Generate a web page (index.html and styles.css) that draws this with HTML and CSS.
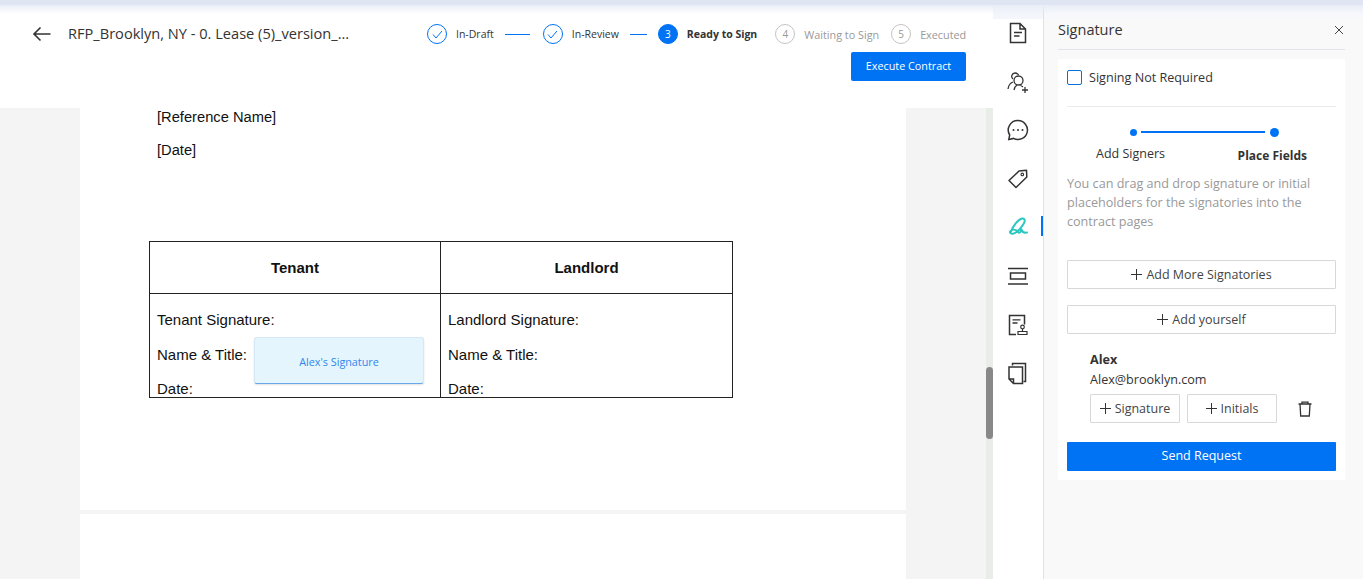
FILE: index.html
```html
<!DOCTYPE html>
<html lang="en">
<head>
<meta charset="utf-8">
<title>Signature</title>
<link rel="stylesheet" href="styles.css">
</head>
<body>
<div class="app">
  <main class="main">
    <header class="header">
      <div class="header-row">
        <svg class="back" width="20" height="16" viewBox="0 0 20 16"><path d="M18.5 8H2M8.5 1.5 2 8l6.5 6.5" fill="none" stroke="#333" stroke-width="1.6"/></svg>
        <span class="doc-title">RFP_Brooklyn, NY - 0. Lease (5)_version_...</span>
        <ol class="steps">
          <li class="step done"><span class="dot"><svg width="11" height="9" viewBox="0 0 11 9"><path d="M1 4.5 4 8l6-7" fill="none" stroke="#0073f5" stroke-width="1"/></svg></span><span>In-Draft</span></li>
          <li class="line l1"></li>
          <li class="step done"><span class="dot"><svg width="11" height="9" viewBox="0 0 11 9"><path d="M1 4.5 4 8l6-7" fill="none" stroke="#0073f5" stroke-width="1"/></svg></span><span>In-Review</span></li>
          <li class="line l2"></li>
          <li class="step current"><span class="dot">3</span><span>Ready to Sign</span></li>
          <li class="step todo s4"><span class="dot">4</span><span>Waiting to Sign</span></li>
          <li class="step todo s5"><span class="dot">5</span><span>Executed</span></li>
        </ol>
      </div>
      <div class="header-actions"><button class="execute">Execute Contract</button></div>
    </header>
    <div class="viewer">
      <div class="pages">
        <section class="page">
          <p class="ref">[Reference Name]</p>
          <p class="ref date">[Date]</p>
          <table class="sign-table">
            <colgroup><col class="col-a"><col class="col-b"></colgroup>
            <tr class="head"><th>Tenant</th><th>Landlord</th></tr>
            <tr>
              <td><p>Tenant Signature:</p><p class="mid">Name &amp; Title:</p><p class="last">Date:</p><div class="placeholder">Alex's Signature</div></td>
              <td><p>Landlord Signature:</p><p class="mid">Name &amp; Title:</p><p class="last">Date:</p></td>
            </tr>
          </table>
        </section>
        <section class="page next"></section>
      </div>
      <div class="scroll"><div class="thumb"></div></div>
    </div>
  </main>
  <nav class="rail">
    <svg class="ico" width="24" height="24" viewBox="0 0 24 24"><path d="M4.5 2.500h9.500l5.500 5.500v13.500h-15zM14 2.500V8h5.500" fill="none" stroke="#333" stroke-width="1.500"/><path d="M8 11.500h8M8 15h5.500" stroke="#333" stroke-width="1.500"/></svg>
    <svg class="ico" width="24" height="24" viewBox="0 0 24 24"><circle cx="12.500" cy="10.500" r="4.500" fill="none" stroke="#333" stroke-width="1.300"/><path d="M7 9C4.500 7 6 3 9 3c1.800 0 3 .8 3.500 2M7 12c-3 1-4.500 3.500-5 7M8 20c.5-2.500 1.500-4 3-5M14.500 15.500c1 .3 1.800.8 2.300 1.500M19 17v6M16 20h6" fill="none" stroke="#333" stroke-width="1.300"/></svg>
    <svg class="ico" width="24" height="24" viewBox="0 0 24 24"><path d="M12 2.500a9.500 9.500 0 1 1-4.500 17.900L2.800 21.500l.9-4.500A9.500 9.500 0 0 1 12 2.500z" fill="none" stroke="#333" stroke-width="1.500"/><circle cx="7.500" cy="12" r="1" fill="#333"/><circle cx="12" cy="12" r="1" fill="#333"/><circle cx="16.500" cy="12" r="1" fill="#333"/></svg>
    <svg class="ico" width="24" height="24" viewBox="0 0 24 24"><path d="M13 4 20.500 3.200l.3 6.800L10 20.500 3 13.500z" fill="none" stroke="#333" stroke-width="1.500" stroke-linejoin="round"/><circle cx="16.300" cy="7.400" r="1.300" fill="none" stroke="#333" stroke-width="1.100"/></svg>
    <div class="active-wrap"><svg class="ico" width="24" height="24" viewBox="0 0 24 24"><path d="M4.500 17.500C7 11 12 4.500 16 3.500c3-.5 3.500 2.500 1.500 5.500-2.500 4-6.500 9-10.500 9.700-3 .3-4-1.700-2-3.200 2.500-1.500 5.500-.5 7 1.500 1.500 1.500 2.500.5 3.500-2.500.5 2.500 2.500 3.500 5.500 3" fill="none" stroke="#2cc7c0" stroke-width="2" stroke-linecap="round" stroke-linejoin="round"/></svg><span class="active-bar"></span></div>
    <svg class="ico" width="24" height="24" viewBox="0 0 24 24"><path d="M2 4.500h20M2 20h20" stroke="#333" stroke-width="1.500"/><rect x="4.500" y="9" width="15" height="6" fill="none" stroke="#333" stroke-width="1.500"/></svg>
    <svg class="ico" width="24" height="24" viewBox="0 0 24 24"><path d="M10 21.500H3.500v-19h15v9" fill="none" stroke="#333" stroke-width="1.500"/><path d="M6.500 6.800h8M6.500 10h5" stroke="#333" stroke-width="1.300"/><circle cx="16.500" cy="14" r="1.800" fill="none" stroke="#333" stroke-width="1.200"/><path d="M16.500 16v2M12 18.500h9v3h-9z" fill="none" stroke="#333" stroke-width="1.200"/></svg>
    <svg class="ico" width="24" height="24" viewBox="0 0 24 24"><path d="M6.500 4.500v-2h13v18h-2" fill="none" stroke="#333" stroke-width="1.500"/><path d="M3 6h13.500v16.500H7.500L3 18zM3 18h4.500v4.500" fill="none" stroke="#333" stroke-width="1.500"/></svg>
  </nav>
  <aside class="panel">
    <div class="panel-head"><h2>Signature</h2><svg width="10" height="10" viewBox="0 0 10 10"><path d="M1 1l8 8M9 1 1 9" stroke="#444" stroke-width="1"/></svg></div>
    <div class="card">
      <label class="check"><span class="box"></span>Signing Not Required</label>
      <div class="wizard">
        <div class="track"><span class="wdot small"></span><span class="wline"></span><span class="wdot"></span></div>
        <div class="wlabels"><span>Add Signers</span><b>Place Fields</b></div>
      </div>
      <p class="hint">You can drag and drop signature or initial placeholders for the signatories into the contract pages</p>
      <button class="outline wide first"><i class="plus"></i>Add More Signatories</button>
      <button class="outline wide"><i class="plus"></i>Add yourself</button>
      <div class="signer">
        <b>Alex</b>
        <span class="email">Alex@brooklyn.com</span>
        <div class="signer-actions">
          <button class="outline"><i class="plus"></i>Signature</button>
          <button class="outline"><i class="plus"></i>Initials</button>
          <svg class="trash" width="16" height="16" viewBox="0 0 16 16"><path d="M1.500 3h13M5 3V1.200h6V3M3 3l.7 12h8.600L13 3" fill="none" stroke="#333" stroke-width="1.300"/></svg>
        </div>
      </div>
      <button class="send">Send Request</button>
    </div>
  </aside>
</div>
</body>
</html>
```
FILE: styles.css
```css
* { box-sizing: border-box; }
html, body { margin: 0; height: 100%; overflow: hidden; }
body { font-family: "Open Sans", "Noto Sans", sans-serif; color: #333; background: #fff; }
button { font-family: inherit; cursor: pointer; }
p, h2, ol { margin: 0; padding: 0; }

.app { display: flex; height: 579px; position: relative; }
.app::before { content: ""; position: absolute; z-index: 3; left: 0; right: 0; top: 0; height: 5px; background: #dfe5f2; }
.app::after { content: ""; position: absolute; z-index: 3; left: 0; right: 0; top: 5px; height: 9px; background: linear-gradient(#e9edf7, rgba(255,255,255,0)); }

.main { width: 993px; display: flex; flex-direction: column; }
.header { height: 108px; padding: 20px 27px 0 32px; background: #fff; flex: none; }
.header-row { display: flex; align-items: center; height: 26px; }
.back { flex: none; margin-top: 1px; }
.doc-title { margin-left: 16px; font-size: 14.600px; color: #333; white-space: nowrap; width: 359px; flex: none; }
.steps { list-style: none; display: flex; align-items: center; font-size: 10.500px; margin-top: 2px; flex: none; white-space: nowrap; }
.step { display: flex; align-items: center; gap: 9px; color: #333; flex: none; }
.dot { width: 20px; height: 20px; flex: none; border-radius: 50%; display: flex; align-items: center; justify-content: center; border: 1px solid #0073f5; font-size: 10px; }
.line { width: 25px; height: 1px; background: #0073f5; margin: 0 13px 0 11px; flex: none; }
.l2 { width: 17px; margin: 0 11px; }
.current { font-weight: 700; }
.current .dot { background: #0073f5; color: #fff; font-weight: 400; }
.todo { color: #999; font-size: 10.800px; }
.todo .dot { border-color: #c4c4c4; color: #999; }
.s4 { margin-left: 18px; }
.s5 { margin-left: 12px; }
.header-actions { display: flex; justify-content: flex-end; margin-top: 6px; }
.execute { width: 115px; height: 29px; border: 0; border-radius: 2px; background: #0073f5; color: #fff; font-size: 10.800px; padding: 0 0 2px; }

.viewer { flex: 1; min-height: 0; display: flex; background: #f4f4f4; overflow: hidden; }
.pages { flex: 1; padding: 0 80px; }
.page { width: 826px; height: 402px; background: #fff; margin-bottom: 4px; padding: 1px 0 0 77px; font-family: "Liberation Sans", Arial, sans-serif; color: #111; }
.page.next { height: 100px; padding: 0; margin: 0; }
.ref { font-size: 14.700px; line-height: 17px; }
.date { margin-top: 16px; }
.sign-table { border-collapse: collapse; table-layout: fixed; width: 583px; margin: 82px 0 0 -8px; font-size: 15px; }
.col-a { width: 291px; }
.col-b { width: 292px; }
.sign-table th, .sign-table td { border: 1px solid #222; padding: 0; }
.sign-table th { height: 52px; font-size: 15px; }
.sign-table td { height: 104px; padding: 0 7px; vertical-align: top; position: relative; overflow: hidden; }
.sign-table td p { line-height: 17px; margin-top: 17px; white-space: nowrap; }
.sign-table td p.mid { margin-top: 18px; }
.sign-table td p.last { margin-top: 17px; height: 13px; }
.placeholder { position: absolute; left: 104px; top: 43px; width: 170px; height: 47px; background: #e5f5fd; border: 1px solid #d5e8f3; border-bottom: 1px solid #66a8e8; border-radius: 3px; color: #2f86ee; font: 10.800px/47px "Open Sans", sans-serif; text-align: center; box-shadow: 0 1px 2px rgba(0,0,0,.12); }
.scroll { width: 7px; background: #e8ede7; flex: none; padding-top: 259px; }
.thumb { height: 72px; background: #888; border-radius: 4px; }

.rail { width: 51px; flex: none; background: linear-gradient(#f3f6fb 19px, #fff 19px); border-right: 1px solid #e2e2e2; display: flex; flex-direction: column; align-items: center; padding-top: 21px; gap: 24.600px; }
.ico { display: block; flex: none; }
.active-wrap { position: relative; width: 100%; display: flex; justify-content: center; }
.active-bar { position: absolute; right: 0; top: 1px; width: 2px; height: 20px; background: #0073f5; }

.panel { flex: 1; background: linear-gradient(#f6f8fc 19px, #f9f9f9 19px); padding: 19px 18px 0 14px; }
.panel-head { display: flex; justify-content: space-between; align-items: center; height: 31px; border-bottom: 1px solid #e3e3ee; padding: 0 1px 9px 0; }
.panel-head h2 { font-size: 14.500px; font-weight: 400; color: #333; }
.card { background: #fff; margin-top: 9px; height: 421px; padding: 0 9px; display: flex; flex-direction: column; }
.check { display: flex; align-items: center; gap: 7px; font-size: 12.600px; height: 48px; border-bottom: 1px solid #ececec; padding-bottom: 10px; flex: none; }
.box { width: 15px; height: 15px; border: 1px solid #0a6fd8; border-radius: 2px; flex: none; }
.wizard { margin-top: 18px; flex: none; }
.track { display: flex; align-items: center; padding-left: 63px; height: 14px; }
.wdot { width: 9px; height: 9px; border-radius: 50%; background: #0073f5; flex: none; }
.wdot.small { width: 7px; height: 7px; }
.wline { width: 124px; height: 2px; background: #0073f5; margin: 0 5px 0 4px; }
.wlabels { display: flex; justify-content: space-between; padding: 0 29px; font-size: 12.500px; }
.wlabels span { margin-top: 6px; }
.wlabels b { margin-top: 8px; font-size: 12px; }
.hint { margin-top: 10px; font-size: 12.600px; line-height: 19px; color: #999; flex: none; }
.outline { background: #fff; border: 1px solid #d8d8d8; border-radius: 1px; color: #444; font-size: 12.500px; height: 29px; padding: 0; display: flex; align-items: center; justify-content: center; gap: 4px; }
.wide { width: 269px; flex: none; margin-top: 16px; }
.wide.first { margin-top: 29px; }
.plus { width: 11px; height: 11px; flex: none; background: linear-gradient(#333,#333) center/11px 1px no-repeat, linear-gradient(#333,#333) center/1px 11px no-repeat; }
.signer { padding: 16px 0 0 23px; display: flex; flex-direction: column; font-size: 12.600px; flex: none; }
.signer b { line-height: 20px; }
.email { line-height: 20px; }
.signer-actions { display: flex; align-items: center; gap: 7px; margin-top: 4px; }
.signer-actions .outline { width: 90px; }
.trash { margin-left: 13px; }
.send { width: 269px; height: 29px; border: 0; border-radius: 1px; background: #0073f5; color: #fff; font-size: 12.500px; margin-top: 19px; flex: none; padding: 0 0 2px; }
```
